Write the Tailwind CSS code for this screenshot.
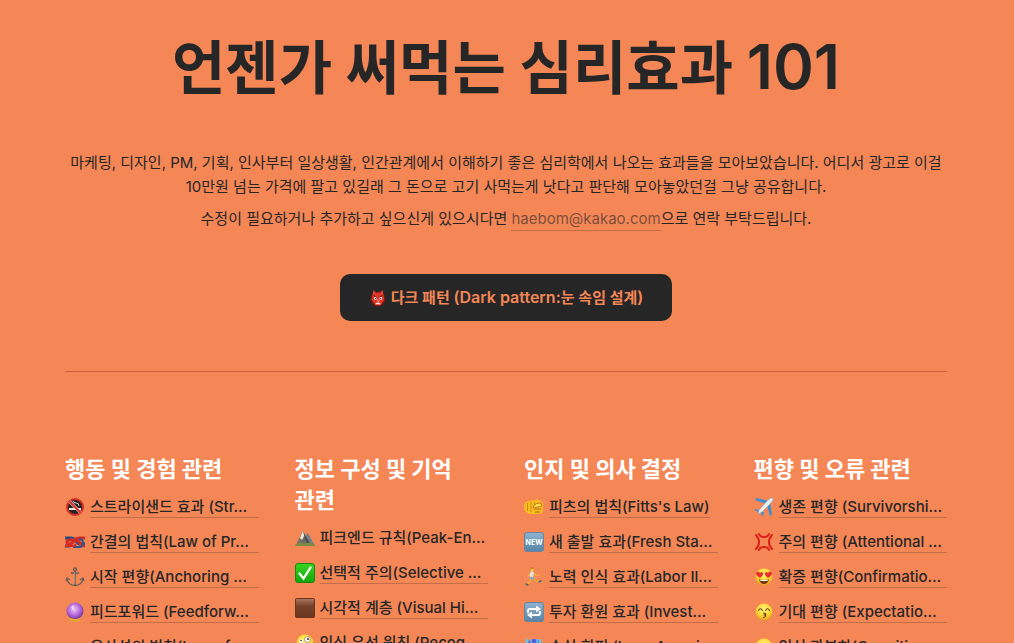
<!DOCTYPE html>
<html lang="ko">
<head>
    <meta charset="UTF-8">
    <meta name="viewport" content="width=device-width, initial-scale=1.0">
    <title>언젠가 써먹는 심리효과 101</title>
    <script src="https://cdn.jsdelivr.net/npm/@tailwindcss/browser@4"></script>
</head>
<body class="h-screen overflow-hidden bg-[#f58757] pl-[65px] pr-[67px] font-['Inter','Noto_Sans_CJK_KR',sans-serif] text-[#262626]">

<!-- Shared gradients -->
<svg class="absolute size-0" aria-hidden="true">
    <defs>
        <radialGradient id="face" cx=".5" cy=".35" r=".65"><stop stop-color="#fff27a"/><stop offset=".6" stop-color="#fdd835"/><stop offset="1" stop-color="#e59a19"/></radialGradient>
        <radialGradient id="ball" cx=".45" cy=".4" r=".6"><stop stop-color="#edc3f7"/><stop offset=".6" stop-color="#b467d8"/><stop offset="1" stop-color="#70349c"/></radialGradient>
        <linearGradient id="tile" x2="0" y2="1"><stop stop-color="#8fb4cf"/><stop offset="1" stop-color="#5784a8"/></linearGradient>
        <linearGradient id="green" x2="0" y2="1"><stop stop-color="#3bd51f"/><stop offset="1" stop-color="#12a80e"/></linearGradient>
        <linearGradient id="brown" x2="0" y2="1"><stop stop-color="#ad7760"/><stop offset=".4" stop-color="#75402a"/><stop offset="1" stop-color="#6c381f"/></linearGradient>
    </defs>
</svg>

<header class="text-center">
    <h1 class="pt-7 text-[58px] leading-[78px] font-bold">언젠가 써먹는 심리효과 <span class="text-[62px] font-semibold">101</span></h1>
    <p class="mt-11 text-[15px] leading-6">마케팅, 디자인, PM, 기획, 인사부터 일상생활, 인간관계에서 이해하기 좋은 심리학에서 나오는 효과들을 모아보았습니다. 어디서 광고로 이걸 10만원 넘는 가격에 팔고 있길래 그 돈으로 고기 사먹는게 낫다고 판단해 모아놓았던걸 그냥 공유합니다.</p>
    <p class="mt-2 text-[15px] leading-6">수정이 필요하거나 추가하고 싶으신게 있으시다면 <a href="mailto:haebom@kakao.com" class="border-b border-[#262626]/25 pb-0.5 text-[#262626]/60">haebom@kakao.com</a>으로 연락 부탁드립니다.</p>
    <button type="button" class="mt-[43px] inline-flex h-[47px] w-[332px] items-center justify-center gap-1 rounded-[10px] bg-[#262626] text-[15px] font-semibold text-[#f58757]">
        <svg class="size-[18px]" viewBox="0 0 20 20"><circle cx="10" cy="11" r="8.500" fill="#6b1a15"/><path d="M4 7 5 1l3 4h4l3-4 1 6z" fill="#ef4a3a"/><path d="M4 6q6-4 12 0l1 6-4 6H7l-4-6z" fill="#df382b"/><path d="m5 7 4 3M15 7l-4 3" stroke="#8e1d17" stroke-width="1.500"/><circle cx="7" cy="10.500" r="1.500" fill="#fff"/><circle cx="13" cy="10.500" r="1.500" fill="#fff"/><circle cx="7.300" cy="10.500" r=".7" fill="#222"/><circle cx="12.700" cy="10.500" r=".7" fill="#222"/><circle cx="10" cy="13" r="1.500" fill="#f66b56"/><path d="M7.500 15.500q2.500-1 5 0v1.500h-5z" fill="#f5e5dc"/></svg>
        <span>다크 패턴 <span class="text-base">(Dark pattern:</span>눈 속임 설계<span class="text-base">)</span></span>
    </button>
</header>

<hr class="mt-[50px] border-[#c9623c]">

<main class="mt-[82px] grid grid-cols-4 gap-9 text-[15px] font-medium">
    <section class="min-w-0">
        <h2 class="mb-1 text-[22px] leading-[31px] font-bold break-keep text-white">행동 및 경험 관련</h2>
        <ul>
            <li class="flex h-[35px] items-center gap-[5px]">
                <svg class="size-5 shrink-0" viewBox="0 0 20 20"><circle cx="10" cy="10" r="8" fill="#292423" stroke="#d62e25" stroke-width="2"/><path d="M4 11h12v2H4z" fill="#e8e4df"/><path d="M14 9q0-3-3-3-3 0-3-2" stroke="#d8d3cf" fill="none"/><path d="m4.500 4.500 11 11" stroke="#f0eeee" stroke-width="3"/><path d="m4.500 4.500 11 11" stroke="#d62e25" stroke-width="2"/></svg>
                <a href="#" class="block h-[22px] min-w-0 flex-1 border-b border-[#262626]/25 leading-[22px] whitespace-nowrap">스트라이샌드 효과 (Str…</a>
            </li>
            <li class="flex h-[35px] items-center gap-[5px]">
                <svg class="size-5 shrink-0" viewBox="0 0 20 20" fill="none" stroke-width="3"><path d="M0 6h6q3 0 5 3t4 3h5M0 14h5" stroke="#254b80"/><path d="M20 6h-6q-3 0-5 3t-4 3q-3 0-3-2t3-2h5q3 0 5 3t5 3" stroke="#d52a22"/><path d="M8 15h6q4 0 4-4t-4-4" stroke="#2a5690" stroke-width="2"/><path d="M0 14h8q2 0 3-2" stroke="#d52a22" stroke-width="2"/></svg>
                <a href="#" class="block h-[22px] min-w-0 flex-1 border-b border-[#262626]/25 leading-[22px] whitespace-nowrap">간결의 법칙(Law of Pr…</a>
            </li>
            <li class="flex h-[35px] items-center gap-[5px]">
                <svg class="size-5 shrink-0" viewBox="0 0 20 20" fill="none" stroke="#665c57" stroke-width="1.300"><circle cx="10" cy="2.500" r="1.500"/><path d="M10 4v14M6 6h8M2 12q1 6 8 6.500Q17 18 18 12"/><path d="m1 14 1-3 3 2M19 14l-1-3-3 2"/><path d="M9.500 5v12" stroke="#b5a79f" stroke-width=".6"/></svg>
                <a href="#" class="block h-[22px] min-w-0 flex-1 border-b border-[#262626]/25 leading-[22px] whitespace-nowrap">시작 편향(Anchoring …</a>
            </li>
            <li class="flex h-[35px] items-center gap-[5px]">
                <svg class="size-5 shrink-0" viewBox="0 0 20 20"><circle cx="10" cy="9" r="8.500" fill="url(#ball)"/><path d="m4 20 2-4q4 2 8 0l2 4-3-1-3 1-3-1z" fill="#e2a62c"/><path d="m6 5 3-2-1 5z" fill="#fff" opacity=".7"/></svg>
                <a href="#" class="block h-[22px] min-w-0 flex-1 border-b border-[#262626]/25 leading-[22px] whitespace-nowrap">피드포워드 (Feedforw…</a>
            </li>
            <li class="flex h-[35px] items-center gap-[5px]">
                <svg class="size-5 shrink-0" viewBox="0 0 20 20"><circle cx="7" cy="14" r="4" fill="#3f7fd0"/><circle cx="13" cy="14" r="4" fill="#3f7fd0"/></svg>
                <a href="#" class="block h-[22px] min-w-0 flex-1 border-b border-[#262626]/25 leading-[22px] whitespace-nowrap">유사성의 법칙(Law of …</a>
            </li>
        </ul>
    </section>

    <section class="min-w-0">
        <h2 class="mb-1 text-[22px] leading-[31px] font-bold break-keep text-white">정보 구성 및 기억 관련</h2>
        <ul>
            <li class="flex h-[35px] items-center gap-[5px]">
                <svg class="size-5 shrink-0" viewBox="0 0 20 20"><path d="m9 9 4-4 7 13H8z" fill="#77818a"/><path d="m1 17 7-14 8 14z" fill="#6d6c68"/><path d="m8 3 4 7-3-2-2 4-2-2z" fill="#f1e8d8"/><path d="m8 3 2 8 3 6h3z" fill="#4a4f54"/><path d="M0 17q5-5 9-1 5-3 11 1v1H0z" fill="#7d8d3d"/></svg>
                <a href="#" class="block h-[22px] min-w-0 flex-1 leading-[22px] whitespace-nowrap">피크엔드 규칙(Peak-En…</a>
            </li>
            <li class="flex h-[35px] items-center gap-[5px]">
                <svg class="size-5 shrink-0" viewBox="0 0 20 20"><rect x=".5" y=".5" width="19" height="19" rx="2.500" fill="url(#green)" stroke="#18861a"/><path d="m4.500 10.500 4 5 7-11" fill="none" stroke="#fff" stroke-width="2.300" stroke-linecap="round"/></svg>
                <a href="#" class="block h-[22px] min-w-0 flex-1 border-b border-[#262626]/25 leading-[22px] whitespace-nowrap">선택적 주의(Selective …</a>
            </li>
            <li class="flex h-[35px] items-center gap-[5px]">
                <svg class="size-5 shrink-0" viewBox="0 0 20 20"><rect x=".5" y=".5" width="19" height="19" rx="1" fill="url(#brown)" stroke="#6b351d"/></svg>
                <a href="#" class="block h-[22px] min-w-0 flex-1 border-b border-[#262626]/25 leading-[22px] whitespace-nowrap">시각적 계층 (Visual Hi…</a>
            </li>
            <li class="flex h-[35px] items-center gap-[5px]">
                <svg class="size-5 shrink-0" viewBox="0 0 20 20"><circle cx="10" cy="10" r="8.500" fill="url(#face)"/><circle cx="6" cy="8" r="2" fill="#fff"/><circle cx="12.500" cy="6.500" r="3" fill="#fff" stroke="#815d25" stroke-width=".6"/><circle cx="6" cy="7.500" r=".8" fill="#422"/><circle cx="13" cy="6" r="1" fill="#422"/><path d="M8 14h5" stroke="#733d12"/></svg>
                <a href="#" class="block h-[22px] min-w-0 flex-1 border-b border-[#262626]/25 leading-[22px] whitespace-nowrap">인식 우선 원칙 (Recog…</a>
            </li>
        </ul>
    </section>

    <section class="min-w-0">
        <h2 class="mb-1 text-[22px] leading-[31px] font-bold break-keep text-white">인지 및 의사 결정</h2>
        <ul>
            <li class="flex h-[35px] items-center gap-[5px]">
                <svg class="size-5 shrink-0" viewBox="0 0 20 20"><path d="M0 9q0-4 3-4 1-2 4-1 2-2 4 0l2-2 4 2q3 2 2 6v3q-1 4-4 4H8q-8 0-8-8z" fill="#f9bd20"/><path d="M3.500 6v8M7 5v10M10.500 5v3" stroke="#c47e19" stroke-width=".8"/><path d="M10 9q1-3 7-3l1 3-4 1-4 1q-2 0 0-2z" fill="#ffdc4a" stroke="#b66d14" stroke-width=".9"/><path d="M10.500 12h7M11 15h5" stroke="#b66716"/></svg>
                <a href="#" class="block h-[22px] min-w-0 border-b border-[#262626]/25 leading-[22px] whitespace-nowrap">피츠의 법칙(Fitts's Law)</a>
            </li>
            <li class="flex h-[35px] items-center gap-[5px]">
                <svg class="size-5 shrink-0" viewBox="0 0 20 20"><rect x=".5" y=".5" width="19" height="19" rx="2.500" fill="url(#tile)" stroke="#67869d"/><text x="10" y="12.500" text-anchor="middle" class="fill-white text-[7px] font-bold">NEW</text></svg>
                <a href="#" class="block h-[22px] min-w-0 flex-1 border-b border-[#262626]/25 leading-[22px] whitespace-nowrap">새 출발 효과(Fresh Sta…</a>
            </li>
            <li class="flex h-[35px] items-center gap-[5px]">
                <svg class="size-5 shrink-0" viewBox="0 0 20 20" fill="none" stroke-linecap="round"><path d="m7 11-1 4-3 2M9 11l3 3 3 1" stroke="#e9ae36" stroke-width="1.700"/><path d="m7 6-3 3M10 6l2 3 3-1" stroke="#f0b93b" stroke-width="1.300"/><path d="m8 6-.500 3" stroke="#e4e5e6" stroke-width="3.500"/><path d="m7 11 2 .5" stroke="#8fa6b5" stroke-width="2.500"/><circle cx="8" cy="2.500" r="1.800" fill="#ffc737"/><path d="M6.500 2q1-1.500 2.500-1" stroke="#8b5427"/><path d="m2 17 2 1M15 15l2-1" stroke="#53606f" stroke-width="1.500"/></svg>
                <a href="#" class="block h-[22px] min-w-0 flex-1 border-b border-[#262626]/25 leading-[22px] whitespace-nowrap">노력 인식 효과(Labor Il…</a>
            </li>
            <li class="flex h-[35px] items-center gap-[5px]">
                <svg class="size-5 shrink-0" viewBox="0 0 20 20"><rect x=".5" y=".5" width="19" height="19" rx="2.500" fill="url(#tile)" stroke="#67869d"/><path d="M4 11V9q0-2 2-2h7M16 9v2q0 2-2 2H7" fill="none" stroke="#fff" stroke-width="2"/><path d="m12 3.500 5 3.500-5 3.500zM8 9.500 3 13l5 3.500z" fill="#fff"/></svg>
                <a href="#" class="block h-[22px] min-w-0 flex-1 border-b border-[#262626]/25 leading-[22px] whitespace-nowrap">투자 환원 효과 (Invest…</a>
            </li>
            <li class="flex h-[35px] items-center gap-[5px]">
                <svg class="size-5 shrink-0" viewBox="0 0 20 20"><circle cx="10" cy="10" r="8" fill="#5360d0"/><path d="M3 1q-3 5 0 5t0-5M16 1q-3 5 0 5t0-5" fill="#63c8f0"/><path d="M7 2v4M13 2v4" stroke="#68c6f3" stroke-width="1.500"/></svg>
                <a href="#" class="block h-[22px] min-w-0 flex-1 border-b border-[#262626]/25 leading-[22px] whitespace-nowrap">손실 회피 (Loss Aversi…</a>
            </li>
        </ul>
    </section>

    <section class="min-w-0">
        <h2 class="mb-1 text-[22px] leading-[31px] font-bold break-keep text-white">편향 및 오류 관련</h2>
        <ul>
            <li class="flex h-[35px] items-center gap-[5px]">
                <svg class="size-5 shrink-0" viewBox="0 0 20 20"><path d="m12 7-11-4 1-2 13 3zM13 8l3 11 2-1-2-13z" fill="#3b8fce"/><path d="m5 13-4-1v1l4 3zM7 15l1 4h1l1-4z" fill="#3b8fce"/><path d="M19 1q1 2-3 6l-8 8-4 2 1-4 8-9q4-4 6-3z" fill="#e8edf0" stroke="#8c9da8" stroke-width=".6"/></svg>
                <a href="#" class="block h-[22px] min-w-0 flex-1 border-b border-[#262626]/25 leading-[22px] whitespace-nowrap">생존 편향 (Survivorshi…</a>
            </li>
            <li class="flex h-[35px] items-center gap-[5px]">
                <svg class="size-5 shrink-0" viewBox="0 0 20 20" fill="none" stroke="#db2118" stroke-width="2" stroke-linecap="round" stroke-linejoin="round"><path d="M5 2q1 3 5 3t5-3M5 18q1-3 5-3t5 3M2 3q3 3 3 7t-3 7M18 3q-3 3-3 7t3 7"/></svg>
                <a href="#" class="block h-[22px] min-w-0 flex-1 border-b border-[#262626]/25 leading-[22px] whitespace-nowrap">주의 편향 (Attentional …</a>
            </li>
            <li class="flex h-[35px] items-center gap-[5px]">
                <svg class="size-5 shrink-0" viewBox="0 0 20 20"><circle cx="10" cy="10" r="8.500" fill="url(#face)"/><path d="M6 11Q0 7 3 5q2-1 3 1 2-2 3 0 1 2-3 5zM14 11q-4-3-3-5 1-2 3 0 1-2 3-1 3 2-3 6z" fill="#ea2e2d"/><path d="M5 12q5 2 10 0-1 5-5 5t-5-5z" fill="#75350f"/><path d="M6 12.500q4 1 8 0v1q-4 1-8 0z" fill="#fff"/></svg>
                <a href="#" class="block h-[22px] min-w-0 flex-1 border-b border-[#262626]/25 leading-[22px] whitespace-nowrap">확증 편향(Confirmatio…</a>
            </li>
            <li class="flex h-[35px] items-center gap-[5px]">
                <svg class="size-5 shrink-0" viewBox="0 0 20 20"><circle cx="10" cy="10" r="8.500" fill="url(#face)"/><path d="M4.500 8.500Q6.500 5 8.500 8.500M11.500 8.500q2-3.500 4 0M9.500 11q4 1 1 2 3 1-1 2.500" fill="none" stroke="#6c3b12" stroke-width="1.100" stroke-linecap="round"/></svg>
                <a href="#" class="block h-[22px] min-w-0 flex-1 border-b border-[#262626]/25 leading-[22px] whitespace-nowrap">기대 편향 (Expectatio…</a>
            </li>
            <li class="flex h-[35px] items-center gap-[5px]">
                <svg class="size-5 shrink-0" viewBox="0 0 20 20"><circle cx="10" cy="10" r="8.500" fill="url(#face)"/><path d="M5 9h3M12 9h3M8 14h4" stroke="#6c3b12"/></svg>
                <a href="#" class="block h-[22px] min-w-0 flex-1 border-b border-[#262626]/25 leading-[22px] whitespace-nowrap">인식 과부하(Cogniti…</a>
            </li>
        </ul>
    </section>
</main>

</body>
</html>
